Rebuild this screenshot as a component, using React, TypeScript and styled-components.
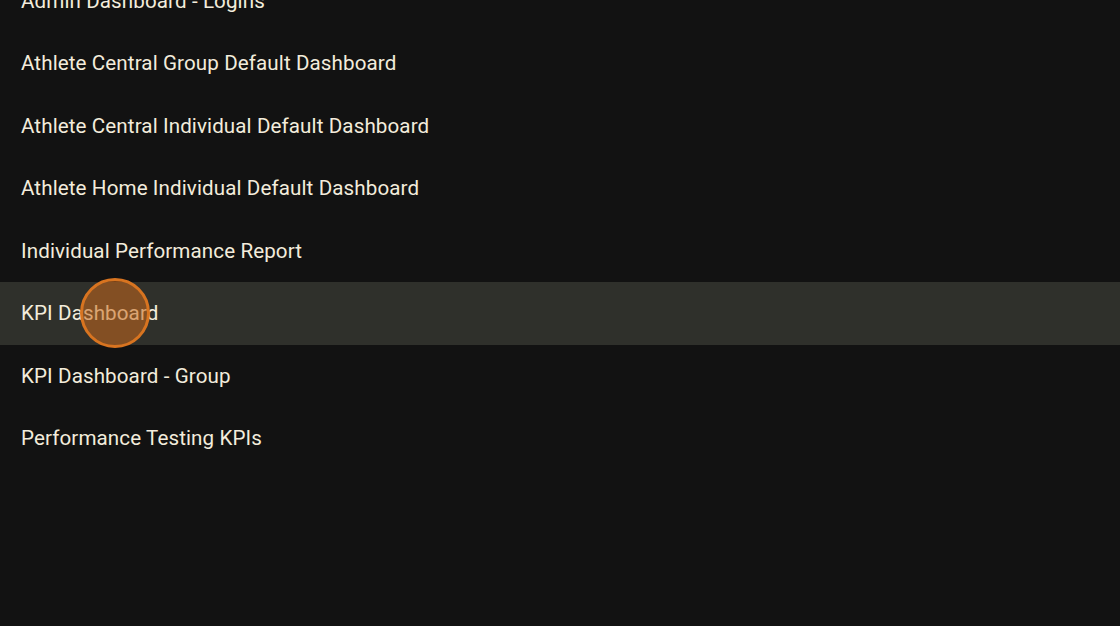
import React from "react";
import styled, { createGlobalStyle } from "styled-components";

const GlobalStyle = createGlobalStyle`
  html, body {
    margin: 0;
    padding: 0;
    background: #121212;
    overflow: hidden;
  }
  body {
    font-family: Roboto, "Noto Sans", Arial, sans-serif;
  }
`;

const Page = styled.div`
  position: relative;
  width: 1120px;
  height: 626px;
  background: #121212;
  overflow: hidden;
`;

const List = styled.ul`
  list-style: none;
  margin: -30.5px 0 0;
  padding: 0;
`;

const Row = styled.li<{ $active?: boolean }>`
  display: flex;
  align-items: center;
  height: 62.5px;
  padding: 0 21px;
  box-sizing: border-box;
  background: ${(p) => (p.$active ? "#2f302b" : "transparent")};
  color: #f3ecdc;
  font-size: 20.6px;
  letter-spacing: 0.1px;
  white-space: nowrap;
`;

const Cursor = styled.div`
  position: absolute;
  left: 80px;
  top: 278px;
  width: 70px;
  height: 70px;
  box-sizing: border-box;
  border-radius: 50%;
  border: 3px solid #d87420;
  background: rgba(200, 105, 30, 0.55);
  pointer-events: none;
`;

const dashboards = [
  "Admin Dashboard - Logins",
  "Athlete Central Group Default Dashboard",
  "Athlete Central Individual Default Dashboard",
  "Athlete Home Individual Default Dashboard",
  "Individual Performance Report",
  "KPI Dashboard",
  "KPI Dashboard - Group",
  "Performance Testing KPIs",
];

export default function App() {
  return (
    <Page>
      <GlobalStyle />
      <List>
        {dashboards.map((name) => (
          <Row key={name} $active={name === "KPI Dashboard"}>
            {name}
          </Row>
        ))}
      </List>
      <Cursor />
    </Page>
  );
}
